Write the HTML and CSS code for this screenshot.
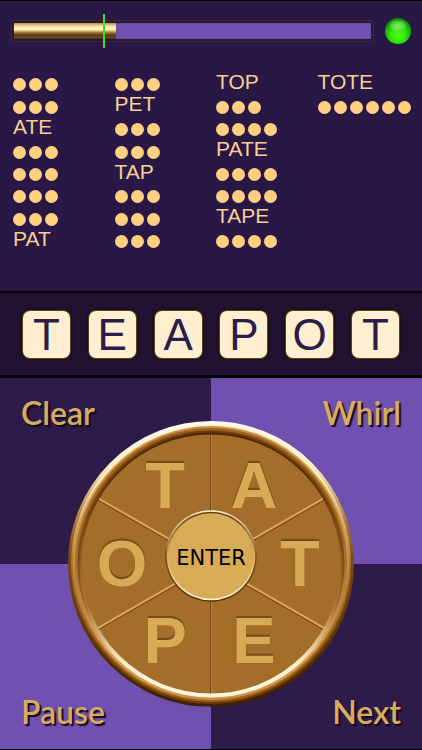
FILE: index.html
```html
<!DOCTYPE html>
<html lang="en">
<head>
    <meta charset="UTF-8">
    <meta name="viewport" content="width=device-width, initial-scale=1.0">
    <title>Word Wheel</title>
    <link rel="stylesheet" href="styles.css">
</head>
<body>
    <!-- Timer and found words -->
    <header class="board">
        <div class="status">
            <div class="meter">
                <progress class="meter-bar" value="28.5" max="100" aria-label="Score"></progress>
                <span class="meter-mark"></span>
            </div>
            <span class="led"></span>
        </div>

        <ul class="words">
            <li class="dots"><i></i><i></i><i></i></li>
            <li class="dots"><i></i><i></i><i></i></li>
            <li>ATE</li>
            <li class="dots"><i></i><i></i><i></i></li>
            <li class="dots"><i></i><i></i><i></i></li>
            <li class="dots"><i></i><i></i><i></i></li>
            <li class="dots"><i></i><i></i><i></i></li>
            <li>PAT</li>

            <li class="dots"><i></i><i></i><i></i></li>
            <li>PET</li>
            <li class="dots"><i></i><i></i><i></i></li>
            <li class="dots"><i></i><i></i><i></i></li>
            <li>TAP</li>
            <li class="dots"><i></i><i></i><i></i></li>
            <li class="dots"><i></i><i></i><i></i></li>
            <li class="dots"><i></i><i></i><i></i></li>

            <li>TOP</li>
            <li class="dots"><i></i><i></i><i></i></li>
            <li class="dots"><i></i><i></i><i></i><i></i></li>
            <li>PATE</li>
            <li class="dots"><i></i><i></i><i></i><i></i></li>
            <li class="dots"><i></i><i></i><i></i><i></i></li>
            <li>TAPE</li>
            <li class="dots"><i></i><i></i><i></i><i></i></li>

            <li>TOTE</li>
            <li class="dots"><i></i><i></i><i></i><i></i><i></i><i></i></li>
        </ul>
    </header>

    <!-- Current word -->
    <section class="tray">
        <span class="tile">T</span>
        <span class="tile">E</span>
        <span class="tile">A</span>
        <span class="tile">P</span>
        <span class="tile">O</span>
        <span class="tile">T</span>
    </section>

    <!-- Controls -->
    <main class="controls">
        <button type="button" class="corner top left dark">Clear</button>
        <button type="button" class="corner top right light">Whirl</button>
        <button type="button" class="corner bottom left light">Pause</button>
        <button type="button" class="corner bottom right dark">Next</button>

        <div class="wheel">
            <svg class="wheel-art" viewBox="0 0 288 288" aria-hidden="true">
                <defs>
                    <linearGradient id="rim1" gradientUnits="userSpaceOnUse" x1="0" y1="0" x2="0" y2="288">
                        <stop offset="0" stop-color="#fffaf0"/><stop offset=".15" stop-color="#fff0c8"/><stop offset=".35" stop-color="#b07834"/><stop offset=".48" stop-color="#7a4a14"/><stop offset=".8" stop-color="#5a3004"/><stop offset="1" stop-color="#3c1e00"/>
                    </linearGradient>
                    <linearGradient id="rim2" gradientUnits="userSpaceOnUse" x1="0" y1="0" x2="0" y2="288">
                        <stop offset="0" stop-color="#fff4dc"/><stop offset=".2" stop-color="#fff2cc"/><stop offset=".5" stop-color="#ac7430"/><stop offset=".8" stop-color="#7a4808"/><stop offset="1" stop-color="#6a3a04"/>
                    </linearGradient>
                    <linearGradient id="rim3" gradientUnits="userSpaceOnUse" x1="0" y1="0" x2="0" y2="288">
                        <stop offset="0" stop-color="#c98c42"/><stop offset=".2" stop-color="#dca254"/><stop offset=".5" stop-color="#c8903f"/><stop offset=".8" stop-color="#a46820"/><stop offset="1" stop-color="#9a601c"/>
                    </linearGradient>
                    <linearGradient id="rim4" gradientUnits="userSpaceOnUse" x1="0" y1="0" x2="0" y2="288">
                        <stop offset="0" stop-color="#9a6020"/><stop offset=".2" stop-color="#a46820"/><stop offset=".5" stop-color="#a87030"/><stop offset=".8" stop-color="#dca254"/><stop offset="1" stop-color="#c98c42"/>
                    </linearGradient>
                    <linearGradient id="rim5" gradientUnits="userSpaceOnUse" x1="0" y1="0" x2="0" y2="288">
                        <stop offset="0" stop-color="#6a3a08"/><stop offset=".2" stop-color="#7a4808"/><stop offset=".5" stop-color="#7c4c18"/><stop offset=".65" stop-color="#a87030"/><stop offset=".85" stop-color="#fff2cc"/><stop offset="1" stop-color="#fff4dc"/>
                    </linearGradient>
                    <linearGradient id="rim6" gradientUnits="userSpaceOnUse" x1="0" y1="0" x2="0" y2="288">
                        <stop offset="0" stop-color="#4a2200"/><stop offset=".2" stop-color="#5a3004"/><stop offset=".5" stop-color="#966024"/><stop offset=".65" stop-color="#b07834"/><stop offset=".85" stop-color="#fff0c8"/><stop offset="1" stop-color="#fffaf0"/>
                    </linearGradient>
                    <linearGradient id="hubOuter" x1="0" y1="0" x2="0" y2="1">
                        <stop offset="0" stop-color="#fff8e4"/><stop offset=".5" stop-color="#7e4e18"/><stop offset="1" stop-color="#5a3004"/>
                    </linearGradient>
                    <linearGradient id="hubInner" x1="0" y1="0" x2="0" y2="1">
                        <stop offset="0" stop-color="#6a3a08"/><stop offset=".5" stop-color="#e0ac60"/><stop offset="1" stop-color="#fff4d4"/>
                    </linearGradient>
                </defs>

                <circle cx="144" cy="144" r="132" fill="#a36d2a"/>

                <!-- Spokes -->
                <g stroke-width="1">
                    <path d="M143.5 12V276" stroke="#704510"/>
                    <path d="M144.5 12V276" stroke="#b98443"/>
                    <path d="M29 79L259 211M29 211L259 79" stroke="#6f4412"/>
                    <path d="M29 77L259 209M29 209L259 77" stroke="#dca458" stroke-width="2"/>
                </g>

                <!-- Bevelled rim -->
                <g fill="none" stroke-width="3">
                    <circle cx="144" cy="144" r="131.5" stroke="url(#rim6)"/>
                    <circle cx="144" cy="144" r="133.5" stroke="url(#rim5)"/>
                    <circle cx="144" cy="144" r="135.5" stroke="url(#rim4)"/>
                    <circle cx="144" cy="144" r="138" stroke="url(#rim3)"/>
                    <circle cx="144" cy="144" r="140" stroke="url(#rim2)"/>
                    <circle cx="144" cy="144" r="142" stroke="url(#rim1)"/>
                </g>

                <!-- Hub -->
                <circle cx="144" cy="136" r="46" fill="url(#hubOuter)"/>
                <circle cx="144" cy="136" r="44.5" fill="url(#hubInner)"/>
                <circle cx="144" cy="136" r="43" fill="#d8ac57"/>
            </svg>

            <button type="button" class="letter north-west">T</button>
            <button type="button" class="letter north-east">A</button>
            <button type="button" class="letter east">T</button>
            <button type="button" class="letter south-east">E</button>
            <button type="button" class="letter south-west">P</button>
            <button type="button" class="letter west">O</button>
            <button type="button" class="enter">ENTER</button>
        </div>
    </main>
</body>
</html>
```
FILE: styles.css
```css
* {
    margin: 0;
    padding: 0;
    box-sizing: border-box;
}

body {
    min-height: 100vh;
    display: flex;
    flex-direction: column;
    background-color: #000;
    font-family: "Liberation Sans", Arial, sans-serif;
}

button {
    border: none;
    background: none;
    cursor: pointer;
}

/* Board */
.board {
    height: 290px;
    margin-top: 1px;
    padding-top: 17px;
    background-color: #291746;
}

.status {
    display: flex;
    align-items: center;
    gap: 12px;
    padding: 0 11px 0 12px;
}

.meter {
    flex: 1;
    height: 20px;
    position: relative;
    border: 2px solid #2b1b2c;
    border-radius: 3px;
    box-shadow: 0 0 1px 1px #3d2840;
}

.meter-bar {
    display: block;
    width: 100%;
    height: 100%;
    border: none;
    appearance: none;
    background-color: #7050b0;
}

.meter-bar::-webkit-progress-bar {
    background-color: #7050b0;
    box-shadow: inset 0 0 1px #2b1b2c;
}

.meter-bar::-webkit-progress-value {
    background: linear-gradient(#b98a4a, #e8cf8c 15%, #fffac8 32%, #fff0b0 42%, #c8924a 55%, #8a5a20 66%, #4c3418 80%, #6b5434 88%, #3c2618);
}

.meter-mark {
    position: absolute;
    top: -9px;
    bottom: -9px;
    left: 25%;
    width: 2px;
    background-color: #38e028;
}

.led {
    width: 26px;
    height: 26px;
    border-radius: 50%;
    background:
        radial-gradient(ellipse 9px 6px at 50% 30%, rgba(150, 240, 130, 0.8), rgba(110, 230, 80, 0.5) 80%, transparent),
        radial-gradient(circle at 50% 65%, #50ff10, #30e808 35%, #12a008 65%, #106012);
}

/* Found and hidden words */
.words {
    height: 179px;
    margin-top: 27px;
    padding: 0 3px 0 13px;
    display: grid;
    grid-template-columns: repeat(4, 1fr);
    grid-template-rows: repeat(8, 1fr);
    grid-auto-flow: column;
    list-style: none;
    color: #f6cf94;
    font-size: 21px;
    line-height: 22px;
}

.dots {
    display: flex;
    align-items: flex-end;
    gap: 3px;
    padding-bottom: 2px;
}

.dots i {
    width: 13px;
    height: 13px;
    border-radius: 50%;
    background-color: #ffd080;
}

/* Current word */
.tray {
    height: 87px;
    padding: 0 23px;
    display: flex;
    justify-content: space-between;
    align-items: center;
    background-color: #201230;
    border-top: 2px solid #050208;
    border-bottom: 3px solid #050208;
}

.tile {
    width: 47px;
    height: 47px;
    border-radius: 7px;
    background-color: #ffeed0;
    box-shadow: 0 0 0 1px #57431f, 0 0 2px 2px #1c1208;
    color: #2d1b48;
    font-size: 44px;
    line-height: 48px;
    text-align: center;
}

/* Controls */
.controls {
    flex: 1;
    position: relative;
    display: grid;
    grid-template-columns: 1fr 1fr;
    grid-template-rows: 1fr 1fr;
    margin-bottom: 1px;
}

.corner {
    display: flex;
    padding: 15px 21px 17px;
    color: #d8ac60;
    font-family: Lato, "Trebuchet MS", sans-serif;
    font-size: 32px;
    font-weight: 600;
    line-height: 40px;
    text-shadow: 2px 2px 1px #140a18;
}

.dark {
    background-color: #2d1b49;
}

.light {
    background-color: #7050b0;
}

.top {
    align-items: flex-start;
}

.bottom {
    align-items: flex-end;
}

.left {
    justify-content: flex-start;
}

.right {
    justify-content: flex-end;
}

/* Letter wheel */
.wheel {
    position: absolute;
    top: 50%;
    left: 50%;
    width: 68%;
    max-width: 360px;
    aspect-ratio: 1;
    border-radius: 50%;
    transform: translate(-50%, -50%);
}

.wheel-art {
    display: block;
    width: 100%;
    height: 100%;
}

.letter,
.enter {
    position: absolute;
    transform: translate(-50%, -50%);
}

.letter {
    width: 60px;
    height: 60px;
    color: #d8aa55;
    font-family: "Liberation Sans", Arial, sans-serif;
    font-size: 65px;
    font-weight: 700;
    line-height: 60px;
    text-shadow: 0 -2px 1px #6f4c18;
}

.north-west {
    top: 23%;
    left: 34%;
}

.north-east {
    top: 23%;
    left: 65%;
}

.east {
    top: 50%;
    left: 81%;
}

.south-east {
    top: 77%;
    left: 65%;
}

.south-west {
    top: 77%;
    left: 34%;
}

.west {
    top: 50%;
    left: 19%;
}

.enter {
    top: 48%;
    left: 50%;
    width: 84px;
    height: 84px;
    border-radius: 50%;
    color: #000;
    font-family: "DejaVu Sans", Verdana, sans-serif;
    font-size: 21px;
}
```
